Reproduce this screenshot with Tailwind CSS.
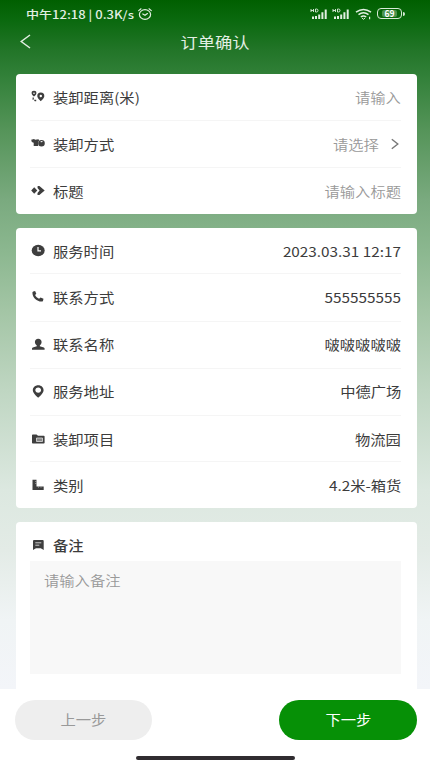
<!DOCTYPE html>
<html lang="zh-CN">
<head>
<meta charset="utf-8">
<meta name="viewport" content="width=device-width, initial-scale=1">
<title>订单确认</title>
<script src="https://cdn.jsdelivr.net/npm/@tailwindcss/browser@4"></script>
</head>
<body class="h-[765px] w-[430px] overflow-hidden bg-white font-['Noto_Sans_CJK_SC',sans-serif] text-[13.6px] leading-5 text-[#3c3c3c]">
<div class="flex h-[765px] flex-col">
  <div class="flex h-[689px] flex-col bg-[linear-gradient(180deg,#005f00_0px,#0a690e_20px,#227528_50px,#318038_75px,#559459_130px,#7aaa7f_200px,#8bb78f_250px,#a3c5a5_310px,#bfd6c2_390px,#dce8e0_490px,#e3ebe6_550px,#f0f4f5_620px,#f3f5f9_689px)]">
    <div class="flex h-[27px] shrink-0 items-center justify-between pl-[26px] pr-[25px] text-[#e2efe2]">
      <div class="flex items-center">
        <div class="w-[112px]"><span class="inline-block origin-left scale-x-[1.185] whitespace-nowrap text-[11px] font-medium">中午12:18 | 0.3K/s</span></div>
        <svg class="h-[12px] w-[14px] shrink-0" viewBox="0 0 14 12" fill="none" stroke="currentColor" stroke-width="1.2" stroke-linecap="round"><ellipse cx="7" cy="6.5" rx="5.600" ry="4.800"/><path d="M.7 2.600 3 .8M13.300 2.600 11 .8M4.800 6l2.200 1.300L9.400 5.600"/></svg>
      </div>
      <div class="flex items-center">
        <svg class="mr-[4px] h-[12px] w-[18px]" viewBox="0 0 18 12"><path d="M1 1v3M3.500 1v3M1 2.500h2.500M5.500 1v3h1a1.500 1.500 0 0 0 0-3z" fill="none" stroke="currentColor" stroke-width=".9"/><path d="M2 8.500h2V11H2zM5 8h2v3H5zM8.200 6.500h2V11h-2zM11.400 4.200h2V11h-2zM14.700 1.500h2V11h-2z" fill="currentColor"/></svg>
        <svg class="mr-[5px] h-[12px] w-[18px]" viewBox="0 0 18 12"><path d="M1 1v3M3.500 1v3M1 2.500h2.500M5.500 1v3h1a1.500 1.500 0 0 0 0-3z" fill="none" stroke="currentColor" stroke-width=".9"/><path d="M2 8.500h2V11H2zM5 8h2v3H5zM8.200 6.500h2V11h-2zM11.400 4.200h2V11h-2zM14.700 1.500h2V11h-2z" fill="currentColor"/></svg>
        <svg class="mr-[5px] h-[12px] w-[17px]" viewBox="0 0 17 12" fill="none" stroke="currentColor" stroke-width="1.500"><path d="M1 4.200q7.500-5.600 15 0M3.500 6.700q5-3.700 10 0M5.800 9q2.700-1.800 5.400 0"/><path d="m7 10 1.500 1.300L10 10" stroke-width="1"/><path d="M14.600 8.800v2.400" stroke-width="1.200"/></svg>
        <div class="flex items-center">
          <div class="flex h-[11px] w-[25px] items-center justify-center rounded-[4px] border-[1.500px] border-[#d7ead7] px-[4px] py-px"><span class="flex h-[7px] w-full items-center justify-center rounded-[2px] bg-[#b7d6b8]/40 text-[8.500px] leading-none font-bold text-white">69</span></div>
          <div class="ml-px h-[4px] w-[2px] rounded-r bg-[#d7ead7]"></div>
        </div>
      </div>
    </div>
    <div class="grid h-[47px] shrink-0 grid-cols-[60px_1fr_60px] pt-[5px] text-[#e3efe3]">
      <svg class="mt-[2px] ml-[20px] h-[15px] w-[11px]" viewBox="0 0 11 15" fill="none" stroke="currentColor" stroke-width="1.500"><path d="M10 1 1.200 7.500 10 14"/></svg>
      <h1 class="text-center text-[15px] leading-[19px]"><span class="inline-block scale-x-[1.150]">订单确认</span></h1>
    </div>

    <main class="flex min-h-0 grow flex-col gap-[14px] pr-[13.5px] pl-[15.5px]">
      <section class="flex h-[140px] shrink-0 flex-col rounded-[4px] bg-white pr-[15.5px] pl-[14.5px]">
        <div class="flex flex-1 items-center border-b border-[#f5f5f5] pb-px pl-px">
          <svg class="mr-[8px] h-[13px] w-[14px] shrink-0" preserveAspectRatio="none" viewBox="0 0 14 12" fill="#3e3e3e"><path fill-rule="evenodd" d="M3 .7a2.400 2.100 0 0 1 2.400 2.200C5.400 4.300 3 6 3 6S.6 4.300.6 2.900A2.400 2.100 0 0 1 3 .7zm0 1.500a.8.700 0 1 0 0 1.400.8.700 0 0 0 0-1.400z"/><path fill-rule="evenodd" d="M9.800 2.300a3.500 3.200 0 0 1 3.500 3.300c0 2.200-3.500 4.700-3.500 4.700S6.300 7.800 6.300 5.600a3.500 3.200 0 0 1 3.500-3.300zm0 2a1.200 1.200 0 1 0 0 2.400 1.200 1.200 0 0 0 0-2.400z"/><path d="M2.200 7v1.500q.3 1.200 3.800 1.200" fill="none" stroke="#3e3e3e" stroke-width="1.300" stroke-dasharray="2 1"/></svg>
          <span class="origin-left scale-x-[1.125]">装卸距离(米)</span>
          <span class="ml-auto origin-right scale-x-[1.125] font-[350] text-[#999]">请输入</span>
        </div>
        <div class="flex flex-1 items-center border-b border-[#f5f5f5] pb-px pl-px">
          <svg class="mr-[8px] h-[13px] w-[14px] shrink-0" preserveAspectRatio="none" viewBox="0 0 14 12" fill="#3e3e3e"><path d="M.2 2.500 3 1.800l1.200.7L7.500 2l.7 1.200-1 1.200v3.800H2.700V5.200L.8 4.600z"/><path fill-rule="evenodd" d="M10.500 2.800a3.300 3 0 1 1 0 6 3.300 3 0 0 1 0-6zM9 4.700l2 .2.800-.9-1.200-.4z"/></svg>
          <span class="origin-left scale-x-[1.125]">装卸方式</span>
          <span class="ml-auto origin-right scale-x-[1.125] font-[350] text-[#999]">请选择</span>
          <svg class="mr-[2px] ml-[12px] h-[12px] w-[8px] shrink-0" viewBox="0 0 8 12" fill="none" stroke="#777" stroke-width="1.400"><path d="m.8 1.200 6 4.800-6 4.800"/></svg>
        </div>
        <div class="flex flex-1 items-center pb-px pl-px">
          <svg class="mr-[8px] h-[13px] w-[14px] shrink-0" preserveAspectRatio="none" viewBox="0 0 14 12" fill="#3e3e3e"><path d="M3.200 2.900 6.300 6 3.200 9.100.2 6z"/><path d="M6.700 1.800h1.700L13.700 6 8.400 10.200H6.500V8.400L8.600 6 6.500 3.600z"/></svg>
          <span class="origin-left scale-x-[1.125]">标题</span>
          <span class="ml-auto origin-right scale-x-[1.125] font-[350] text-[#999]">请输入标题</span>
        </div>
      </section>

      <section class="flex h-[279.5px] shrink-0 flex-col rounded-[4px] bg-white pr-[15.5px] pl-[14.5px]">
        <div class="flex flex-1 items-center border-b border-[#f5f5f5] pl-px">
          <svg class="mr-[8px] h-[13px] w-[14px] shrink-0" preserveAspectRatio="none" viewBox="0 0 14 12"><ellipse cx="7.200" cy="6" rx="6.500" ry="5.300" fill="#3e3e3e"/><path d="M7 2.800v3.600h3" fill="none" stroke="#fff" stroke-width="1.200"/></svg>
          <span class="origin-left scale-x-[1.125]">服务时间</span><span class="ml-auto origin-right scale-x-[1.125]">2023.03.31 12:17</span>
        </div>
        <div class="flex flex-1 items-center border-b border-[#f5f5f5] pb-px pl-px">
          <svg class="mr-[8px] h-[13px] w-[14px] shrink-0" preserveAspectRatio="none" viewBox="0 0 14 12" fill="#3e3e3e"><path d="M2.200 1.300 4.100.9l1.200 2.500-1.200 1.200c.8 1.600 2.200 2.700 4 3.400l1.400-1.100 3 1.100-.5 1.900c-.2.600-.8.800-1.600.8C5.800 10.500 1.500 7 1.400 2.500c0-.6.300-1.100.8-1.200z"/></svg>
          <span class="origin-left scale-x-[1.125]">联系方式</span><span class="ml-auto origin-right scale-x-[1.125]">555555555</span>
        </div>
        <div class="flex flex-1 items-center border-b border-[#f5f5f5] pb-px pl-px">
          <svg class="mr-[8px] h-[13px] w-[14px] shrink-0" preserveAspectRatio="none" viewBox="0 0 14 12" fill="#3e3e3e"><path d="M7.200.7c2.100 0 3.400 1.300 3.400 3.100 0 1.500-.8 2.500-1.800 3.100v.7l4 1.100c.5.200.8.600.8 1.100v1.100H1V9.800c0-.5.300-.9.800-1.100l4-1.100v-.7C4.700 6.300 3.900 5.300 3.900 3.800 3.900 2 5.200.7 7.200.7z"/></svg>
          <span class="origin-left scale-x-[1.125]">联系名称</span><span class="ml-auto origin-right scale-x-[1.125]">啵啵啵啵啵</span>
        </div>
        <div class="flex flex-1 items-center border-b border-[#f5f5f5] pb-px pl-px">
          <svg class="mr-[8px] h-[13px] w-[14px] shrink-0" preserveAspectRatio="none" viewBox="0 0 14 12" fill="#3e3e3e"><path fill-rule="evenodd" d="M7.200.2c3.200 0 5.400 2 5.400 4.700 0 3.200-5.400 6.800-5.400 6.800S1.800 8.100 1.800 4.900C1.800 2.200 4 .2 7.200.2zm0 2C5.500 2.200 4.300 3.300 4.300 4.700s1.200 2.500 2.900 2.500 2.900-1.100 2.900-2.500-1.200-2.500-2.900-2.500z"/></svg>
          <span class="origin-left scale-x-[1.125]">服务地址</span><span class="ml-auto origin-right scale-x-[1.125]">中德广场</span>
        </div>
        <div class="flex flex-1 items-center border-b border-[#f5f5f5] pl-px">
          <svg class="mr-[8px] h-[12px] w-[14px] shrink-0" viewBox="0 0 14 12"><path d="M1 2.200q0-.7.800-.7h3.700L7 2.700h5.800q.8 0 .8.700v6.400q0 .7-.8.700h-11q-.8 0-.8-.7z" fill="#3e3e3e"/><path d="M5.500 5h6v3.500h-6z" fill="#888" stroke="#ddd" stroke-width=".8"/></svg>
          <span class="origin-left scale-x-[1.125]">装卸项目</span><span class="ml-auto origin-right scale-x-[1.125]">物流园</span>
        </div>
        <div class="flex flex-1 items-center pl-px">
          <svg class="mr-[8px] h-[12px] w-[14px] shrink-0" viewBox="0 0 14 12"><path d="M1.500.8h4v6.700h7.200V11H1.500z" fill="#3e3e3e"/><path d="M4.200 2.500h1.300M4.200 4.500h1.300M7.500 7.500v1.200M10 7.500v1.200" stroke="#bbb" stroke-width=".7"/></svg>
          <span class="origin-left scale-x-[1.125]">类别</span><span class="ml-auto origin-right scale-x-[1.125]">4.2米-箱货</span>
        </div>
      </section>

      <section class="min-h-0 grow rounded-t-[4px] bg-white pt-[13px] pr-[15.5px] pl-[14.5px]">
        <div class="flex h-[20px] items-center pl-px">
          <svg class="mr-[8px] h-[12px] w-[14px] shrink-0" viewBox="0 0 14 12"><path d="M2 2q0-1 1-1h8.700q1 0 1 1v9L9.800 9.300H5L2 11z" fill="#3e3e3e"/><path d="M4.300 3.800h6M4.300 6.200h4" stroke="#ddd" stroke-width=".9"/></svg>
          <span class="origin-left scale-x-[1.125] font-medium">备注</span>
        </div>
        <div class="mt-[6.5px] h-[113px] bg-[#f8f8f8] px-[14px] pt-[8.5px]"><span class="inline-block origin-left scale-x-[1.125] font-[350] text-[#999]">请输入备注</span></div>
      </section>
    </main>
  </div>

  <footer class="flex grow flex-col items-center justify-between bg-white pt-[11px] pb-[5.5px]">
    <div class="flex w-full justify-between pr-[13px] pl-[15px]">
      <button class="h-[40px] w-[137px] rounded-full bg-[#eee] pb-[2px] text-[#999]"><span class="inline-block scale-x-[1.125]">上一步</span></button>
      <button class="h-[40px] w-[138px] rounded-full bg-[#069006] pb-[2px] text-white"><span class="inline-block scale-x-[1.125]">下一步</span></button>
    </div>
    <div class="h-[3.5px] w-[159px] rounded-full bg-[#302c30]"></div>
  </footer>
</div>
</body>
</html>
